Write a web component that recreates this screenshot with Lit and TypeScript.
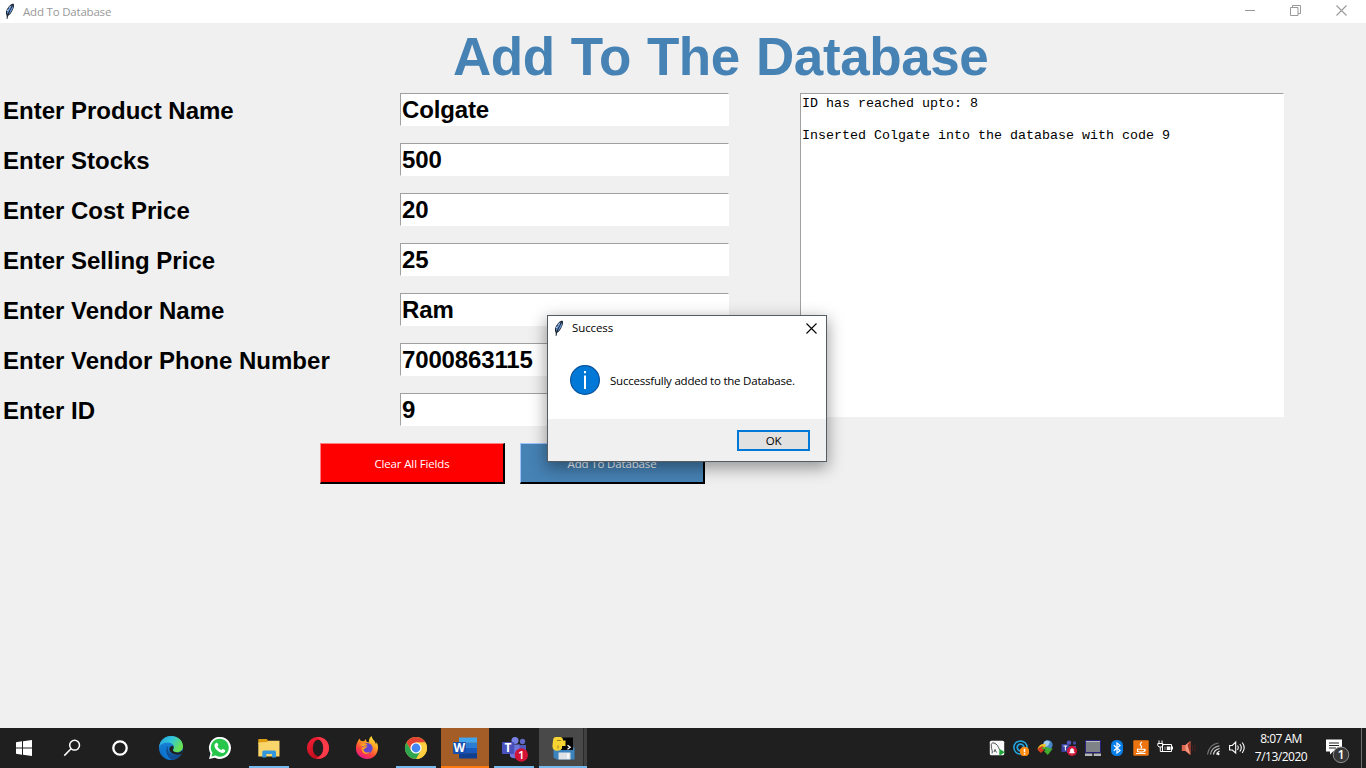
import { LitElement, html, css, svg, nothing } from "lit";
import { customElement, property } from "lit/decorators.js";

const feather = html`<svg width="12" height="17" viewBox="0 0 12 17">
  <path d="M3 16 L2.6 12.5 C1 9 3 5.5 5.5 2.8 C7 1 8.7 .6 9.6 .8 C10.5 2.5 10 4.5 9 6.3 C8.2 8.6 6.6 11.5 4.3 12.6z" fill="#17202e"/>
  <path d="M3.3 11.5 C2.4 8 5 4.6 7.4 2.2 L7 5.2 L4.6 9z" fill="#6ba0e6"/>
  <path d="M4.6 11.3 L6.2 7.5 L9.2 2 C9.6 4.2 7.6 9.4 4.6 11.3z" fill="#6d9ee0"/>
  <path d="M3 16 L4.3 10 L8.6 2" fill="none" stroke="#26303d" stroke-width=".7"/>
  <path d="M5 4.8 L6.8 2.7 M3.2 8 L4 6.4" stroke="#d4e2f3" stroke-width=".9"/>
</svg>`;

const icons: Record<string, unknown> = {
  start: svg`<path fill="#fff" d="M4 6.2 10 5.3v6.2H4zM11 5.2 20 4v7.5h-9zM4 12.5h6v6.2l-6-.9zM11 12.5h9V20l-9-1.3z"/>`,
  search: svg`<g fill="none" stroke="#fff" stroke-width="1.5"><circle cx="14.6" cy="9.2" r="4.9"/><path d="M11 12.8 4.3 19.6"/></g>`,
  cortana: svg`<circle cx="12" cy="12" r="6.7" fill="none" stroke="#fff" stroke-width="2.3"/>`,
  edge: svg`<defs><linearGradient id="eg" x1="0" y1="0" x2="1" y2=".5"><stop offset="0" stop-color="#269fdc"/><stop offset=".5" stop-color="#31c6dc"/><stop offset="1" stop-color="#6be24b"/></linearGradient>
    <linearGradient id="eb" x1="0" y1="0" x2="0" y2="1"><stop offset="0" stop-color="#1d8fe0"/><stop offset="1" stop-color="#0b62bb"/></linearGradient></defs>
    <circle cx="12" cy="12" r="12" fill="url(#eb)"/>
    <path d="M.1 11C1 4.2 6 0 12 0c7 0 12 4.800 12 10.300 0 3.700-2.800 6-6 6-2.800 0-4.200-1-4.200-2 0-.8 1-1.200 1-3C14.800 8.500 12 6.600 8.600 6.600 4.600 6.600 1.400 8.400.1 11z" fill="url(#eg)"/>
    <path d="M8.800 9.300C5.500 13.500 8.500 21 13 23.900 7.500 24.300 3.600 20 3.700 15.500 3.700 12 6 9.800 8.800 9.300z" fill="#0d78d1"/>
    <path d="M9.400 9.500C6.500 16.500 13 21.500 22 17.600 20.200 21.200 17 23.400 13 23.900 7 20.500 5.500 13 9.400 9.500z" fill="#124d91"/>
    <path d="M14.700 12.300C13.200 14.300 14 16 18 16.500 20.500 16.600 22.200 15.500 23.200 13.900 24 16 22.800 17.200 22.300 18 16.500 20 10.500 17.500 10.300 13 10.400 11 12 9.600 14.300 9.800z" fill="#202020"/>`,
  whatsapp: svg`<path d="M1 23 2.500 17.500A11 11 0 1 1 7 21.700z" fill="#fff"/><path d="M3.300 20.600 4.500 17A9 9 0 1 1 7.500 19.600z" fill="#29c64c"/>
    <path d="M8.400 6.700c.6-.2 1 0 1.300.8l.6 1.500c.2.500-.5 1.100-.8 1.500.9 1.700 2.100 2.800 3.900 3.600.7-.7 1-1.300 1.500-1.100l2 1c.7.400.2 1.700-.5 2.300-1.200 1-2.700.7-4.500-.1-2.400-1-4.200-2.900-5.200-5.200-.7-1.700 0-3.700 1.700-4.300z" fill="#fff"/>`,
  explorer: svg`<path d="M1.300 3h8.500l1.500 2h9v3H1.300z" fill="#dc9d12"/><path d="M1.300 6.500 10 6l1.500-1.300h11V20.500H1.300z" fill="#fad56c"/>
    <path d="M5.300 21.500v-5.500q0-1.500 1.500-1.500H17.500q1.500 0 1.500 1.500v5.500H15v-3.500H9.300v3.500z" fill="#3297dd"/>`,
  opera: svg`<defs><linearGradient id="op" x1="0" y1="0" x2=".7" y2="1"><stop offset="0" stop-color="#fa2137"/><stop offset="1" stop-color="#b30917"/></linearGradient></defs>
    <ellipse cx="12" cy="12" rx="11" ry="11" fill="url(#op)"/><path d="M10 1.600C16 .2 23 4 23 12S16 23.800 10 22.400C19 20.500 19 3.500 10 1.600z" fill="#fb3b49"/><ellipse cx="12" cy="12" rx="5.2" ry="8.300" fill="#201f1f"/>`,
  firefox: svg`<defs><linearGradient id="ff" x1=".85" y1="0" x2=".3" y2="1"><stop offset="0" stop-color="#fff13c"/><stop offset=".4" stop-color="#ff9a23"/><stop offset=".72" stop-color="#ff3f3d"/><stop offset="1" stop-color="#e3178c"/></linearGradient></defs>
    <path d="M2.500 6C3 4 4.400 3 4.900 2.500 5 4 5.500 4.700 6.600 5L9 5.200 11 2.900 11.300 5.600 13.800 6.500C13.700 3.200 15 .8 16.700 0c0 3 3.400 4.600 4.300 8.300C21.500 7.500 21.500 6.600 21.500 6 23.500 9 23.800 14.500 21 18.400 16.900 24 8.500 24.600 3.800 19.600.2 15.800.3 9.800 2.500 6z" fill="url(#ff)"/>
    <circle cx="12.300" cy="12.300" r="5.300" fill="#6547cf"/><path d="M6.500 12.500C7.500 10 10 11 12.500 9.500 11.300 12.500 9.500 12 8.500 14 9.500 16.500 12.500 17.300 14.800 15.800 12.500 20 6.500 17.800 6.500 12.500zM4.500 9 8.500 7 12.500 8.500 9 10.500z" fill="#ff9c24"/>`,
  chrome: svg`<circle cx="12" cy="12" r="11" fill="#fbc93d"/><path d="M2.500 6.400A11 11 0 0 1 21.500 6.500H12L7 14z" fill="#e34234"/><path d="M2.500 6.400 7.300 14.700 12 17.500 16.700 14.800 12.200 23A11 11 0 0 1 2.500 6.400z" fill="#30a550"/><path d="M12.200 23 16.800 14.800 17.500 10.500 12 6.500h9.500A11 11 0 0 1 12.200 23z" fill="#fdce3e"/><circle cx="12" cy="12" r="5.600" fill="#fff"/><circle cx="12" cy="12" r="4.400" fill="#4587f1"/>`,
  word: svg`<path d="M6 1.500h18v5.300H6z" fill="#41a5ee"/><path d="M6 6.800h18V12H6z" fill="#2b7cd3"/><path d="M6 12h18v5.300H6z" fill="#185abd"/><path d="M6 17.200h18v5.300H6z" fill="#103f91"/><rect x="0" y="6" width="13" height="12" rx="1" fill="#174fae"/>
    <text x="6.400" y="16.300" font-size="12" text-anchor="middle" class="glyph">W</text>`,
  teams: svg`<circle cx="20.500" cy="5.500" r="2.700" fill="#6169c5"/><circle cx="13" cy="4.500" r="3.500" fill="#7780e5"/><path d="M8 8.500h10v9a6 6 0 0 1-10 3z" fill="#6e77dd"/><path d="M17.500 9H24v7a5 5 0 0 1-6.500 4z" fill="#535bbd"/><rect x="0" y="6" width="12.300" height="12" rx="1" fill="#4951bc"/><text x="6" y="16.300" font-size="12" text-anchor="middle" class="glyph">T</text>
    <circle cx="19.300" cy="19" r="6.700" fill="#d01336"/><text x="19.200" y="23" font-size="11.500" text-anchor="middle" class="glyph thin">1</text>`,
  idle: svg`<path d="M2.500 11.500h21v12h-18l-3-2z" fill="#3b83bd"/><path d="M7.500 16.500h12v7h-12z" fill="#dfe2e7"/><path d="M16 17.500h2v5h-2z" fill="#f8f8f8"/><path d="M10 1.500h12v12.500H10z" fill="#070707"/><path d="m16.500 9.300 2.700 2-2.700 2" stroke="#fff" fill="none" stroke-width="1.300"/><path d="M2 5Q2 1 5 1h4Q12 1 12 4.500h2.500v5.500H11v2.500Q9 15.500 4 14.500 1 13 1.500 9z" fill="#f8d432"/><path d="M6 4.500h4M7 9.500v3" stroke="#8a6a10" stroke-width=".8"/>`,
};

const trayIcons = [
  svg`<rect x=".8" y=".8" width="14.400" height="14.400" rx="1.500" fill="#f8f8f8"/><path d="M3 13.500C4 11.500 2.500 9.500 2.300 6.500 2 3.500 3 2.500 5 3 8 3.800 9.500 7 10.300 9.300L13 12 10.500 13M5 12 6 9.500 7.500 12.500" fill="none" stroke="#4f5357" stroke-width="1"/><path d="m10.300 8.800 5.700 3.400-5.700 3.500z" fill="#22a63c"/>`,
  svg`<circle cx="7.500" cy="7.500" r="6.600" fill="none" stroke="#23a7e3" stroke-width="1.500"/><circle cx="7.500" cy="7.500" r="3.300" fill="none" stroke="#23a7e3" stroke-width="1.700"/><circle cx="11.500" cy="11.500" r="4.800" fill="#ff8a10"/><path d="M11.500 8.700v3.500M11.500 13v1.500" stroke="#fff" stroke-width="1.500"/>`,
  svg`<circle cx="10.800" cy="5" r="4.800" fill="#4687c9"/><path d="M7 2q3-3 6 0l-2 4q-3 1-5 0z" fill="#a1cced"/><path d="M.5 9Q3 2.500 9 4.500L7.500 9z" fill="#edc323"/><path d="M.5 10Q1 7 6 6l1 4-3 3z" fill="#d43c21"/><path d="M5 7.500Q11 6 13 8.500h2.800l-5 6.500-4-4 2-1Q8 9 5 9z" fill="#42ad2f"/>`,
  svg`<circle cx="8" cy="2.800" r="2.300" fill="#535abf"/><circle cx="13.500" cy="3" r="1.700" fill="#444ba5"/><path d="M6 6h9v7H6z" fill="#5058b7"/><path d="M.5 4H8v8H.5z" fill="#39429e"/><path d="M2.500 6h3.800M4.400 6v4.500" stroke="#fff"/><circle cx="11" cy="11" r="5" fill="#d31639"/><path d="M8.300 13h5.400l-.9-1.300V9.800q-1.800-3-3.600 0v1.900zM10.300 14h1.400" fill="#fff" stroke="#fff" stroke-width=".4"/>`,
  svg`<path d="M.5 .5h15v12H.5z" fill="#7f8387" stroke="#29237c"/><path d="M1 1.500h14" stroke="#b7bbc4"/><path d="M0 13.500h7.300V16H0zM8.700 13.500H16V16H8.700z" fill="#b5b9bd"/>`,
  svg`<rect x="2" width="12" height="16" rx="5.500" fill="#087ee9"/><path d="m4.800 5.200 6.200 5.400L8 13V3l3 2.400-6.200 5.400" fill="none" stroke="#fff" stroke-width="1.200"/>`,
  svg`<rect x=".3" y=".3" width="15.400" height="15.400" rx="1" fill="#ee7410"/><path d="M9 2q-3 2.500-1 3.800 1.300 1-.2 2.500M4.500 9.200h7v2q-3.500 1.800-7 0zM11.500 9.500q2 .2 0 1.800M3 13.500h9.500" fill="none" stroke="#fff" stroke-width="1.100"/>`,
  svg`<path d="M5.500 4.500h9v7h-9zM15.500 6.500v3M2 .5v3M5 .5v3M.8 3.500h5v2l-1 1.500H2L.8 5.500zM3.300 7v4.500h3" fill="none" stroke="#fff"/><path d="M10 6.500h3.500v3.500H10z" fill="#fff"/><path d="M7 6.500h3v3.500H7z" fill="#555"/>`,
  svg`<path d="M.8 5h3.500L9.500 .8v14.400L4.300 11H.8z" fill="#dc6650"/><path d="M4.500 5.300 9 1.700v12.600L4.500 10.600z" fill="#f19b82"/><path d="M6.500 5 9.500 1v14z" fill="#a33325"/><path d="M11.500 5v6M14 4v8" stroke="#44221f"/>`,
  svg`<g fill="none" stroke="#eee" stroke-width="1.200"><path d="M11.600 14.500q0-2 3-3.500"/><path d="M8.500 14.500Q9 9.800 14.500 8.500"/><path d="M5.500 14.500Q6.500 7 14.500 5.800" stroke="#aaa"/><path d="M2.500 14.500Q4 4.500 13.500 3" stroke="#777"/></g><circle cx="13.300" cy="14" r="1.200" fill="#fff"/>`,
  svg`<g fill="none" stroke="#fff" stroke-width="1.100"><path d="M.6 5.500h2.700L6.700 2v11L3.300 10H.6zM8.500 5.500q1.500 2 0 4.500M10.800 4q3 3.500 0 7.500M13.200 2.500q4 5 0 10.500"/></g>`,
];

@customElement("close-glyph")
class CloseGlyph extends LitElement {
  static styles = css`:host { display: block; width: 11px; height: 11px } svg { display: block }`;
  render() {
    return html`<svg width="11" height="11" viewBox="0 0 11 11"><path d="M.5 .5 10.500 10.500M10.500 .5 .5 10.500" stroke="currentColor" stroke-width="1.100"/></svg>`;
  }
}

@customElement("message-box")
class MessageBox extends LitElement {
  static styles = css`
    :host { box-sizing: border-box; display: flex; flex-direction: column; width: 280px; height: 147px; background: #fff;
      border: 1px solid #555c62; box-shadow: 0 5px 15px 1px rgba(0,0,0,.38);
      font: 12px "Open Sans", sans-serif; color: #000; }
    .bar { display: flex; align-items: center; height: 24px; padding: 0 9px 0 5px; }
    .bar svg { margin-right: 7px; }
    .caption { flex: 1; font-size: 11.500px; letter-spacing: -.1px; padding-bottom: 2px; }
    .body { flex: 1; display: flex; align-items: center; padding: 0 0 0 22px; }
    .message { margin-left: 10px; font-size: 11.500px; letter-spacing: -.22px; white-space: nowrap; padding-top: 2px; }
    .footer { display: flex; justify-content: flex-end; align-items: center; height: 42px; padding-right: 16px; background: #f0f0f0; }
    .ok { box-sizing: border-box; width: 73px; height: 21px; border: 2px solid #0078d7; background: #e1e1e1; padding: 0; color: #000;
      font: 11.500px "Open Sans", sans-serif; line-height: 17px; letter-spacing: -.3px; }
  `;
  render() {
    return html`
      <div class="bar">${feather}<span class="caption">Success</span><close-glyph></close-glyph></div>
      <div class="body">
        <svg width="30" height="30" viewBox="0 0 30 30"><circle cx="15" cy="15" r="14.400" fill="#0078d7" stroke="#07529a" stroke-width="1.200"/><path d="M14 10.500h2V24h-2zM14 6h2v2.200h-2z" fill="#fff"/></svg>
        <span class="message">Successfully added to the Database.</span>
      </div>
      <div class="footer"><button class="ok">OK</button></div>`;
  }
}

@customElement("task-bar")
class TaskBar extends LitElement {
  static styles = css`
    :host { display: flex; height: 40px; background: #1f1f1f; color: #fff; font-family: "Open Sans", sans-serif; }
    .cell { display: flex; align-items: center; justify-content: center; width: 48px; height: 40px; box-sizing: border-box; }
    .apps { display: flex; gap: 1px; margin-left: 3px; }
    .open { background: linear-gradient(#76b9ed, #76b9ed) center bottom / 40px 2px no-repeat; }
    .alert { background: #a55d27; border-bottom: 2px solid #ff7a10; padding-top: 2px; }
    .active { background: linear-gradient(#76b9ed, #76b9ed) bottom / 100% 2px no-repeat, linear-gradient(90deg, #494949 44px, #2a2a2a 44px, #2a2a2a 45px, #414141 45px); }
    .glyph { fill: #fff; font-family: "Open Sans", sans-serif; font-weight: 700; }
    .thin { font-weight: 600; }
    .tray { display: flex; align-items: center; gap: 8px; margin-left: auto; }
    .tray svg { display: block; }
    .clock { width: 72px; text-align: center; font-size: 12px; line-height: 18px; letter-spacing: -.5px; padding-bottom: 1px; white-space: nowrap; box-sizing: border-box; }
    .note { width: 44px; display: flex; justify-content: center; padding: 2px 4px 0 0; box-sizing: border-box; }
    .peek { width: 4px; border-left: 1px solid #6d6d6d; }
    .right { display: flex; align-items: center; }
  `;
  private cell(name: string, state = "") {
    return html`<div class="cell ${state}"><svg width="24" height="24" viewBox="0 0 24 24" overflow="visible">${icons[name]}</svg></div>`;
  }
  render() {
    return html`
      ${this.cell("start")}${this.cell("search")}${this.cell("cortana")}
      <div class="apps">
        ${this.cell("edge")}${this.cell("whatsapp")}${this.cell("explorer", "open")}${this.cell("opera")}${this.cell("firefox")}
        ${this.cell("chrome", "open")}${this.cell("word", "alert")}${this.cell("teams", "open")}${this.cell("idle", "active")}
      </div>
      <div class="tray">${trayIcons.map((i) => html`<svg width="16" height="16" viewBox="0 0 16 16">${i}</svg>`)}</div>
      <div class="right">
        <div class="clock"><div>8:07 AM</div><div>7/13/2020</div></div>
        <div class="note"><svg width="26" height="28" viewBox="0 0 26 28"><path d="M2 4.500h16v12h-9l-3 3v-3H2z" fill="#fff"/><path d="M5 8h10M5 10.500h10M5 13h7" stroke="#222"/><circle cx="17" cy="19.800" r="7.800" fill="#383838" stroke="#909090"/><text x="17" y="24.200" text-anchor="middle" font-size="12.500" class="glyph thin">1</text></svg></div>
      </div>
      <div class="peek"></div>`;
  }
}

@customElement("form-row")
class FormRow extends LitElement {
  @property() label = "";
  @property() value = "";
  static styles = css`
    :host { display: grid; grid-template: 33px / 400px 329px; font: bold 24px "Liberation Sans", Arial, sans-serif; color: #000; }
    .label { padding-left: 3px; line-height: 36px; white-space: nowrap; }
    .field { box-sizing: border-box; background: #fff; border: 1px solid #a0a0a0; border-right-color: #fff; border-bottom-color: #fff; padding-left: 1px; line-height: 32px; letter-spacing: -.15px; }
  `;
  render() {
    return html`<div class="label">${this.label}</div><div class="field">${this.value || nothing}</div>`;
  }
}

@customElement("app-root")
class AppRoot extends LitElement {
  static styles = css`
    :host { display: flex; flex-direction: column; position: relative; width: 1366px; height: 768px; overflow: hidden; background: #f0f0f0; }
    .titlebar { display: flex; align-items: center; height: 23px; background: #fff; color: #999; padding: 0 19px 0 4px; box-sizing: border-box; font: 11.500px "Open Sans", sans-serif; }
    .titlebar .name { flex: 1; margin-left: 7px; letter-spacing: -.2px; }
    .controls { display: flex; align-items: center; gap: 35px; margin-top: -2px; }
    .content { flex: 1; display: flex; flex-direction: column; }
    .heading { margin: 0; padding-left: 453px; height: 70px; font: bold 53px/68px "Liberation Sans", Arial, sans-serif; letter-spacing: -.4px; word-spacing: 1.700px; color: #4682b4; white-space: nowrap; }
    .columns { display: flex; gap: 71px; height: 350px; }
    .form { display: flex; flex-direction: column; gap: 17px; width: 729px; }
    .log { box-sizing: border-box; width: 484px; height: 324px; margin: 0; background: #fff; border: 1px solid #a0a0a0; border-right-color: #fff; border-bottom-color: #fff; padding: 2px 1px 1px; font: 13.330px/16px "Liberation Mono", "Courier New", monospace; color: #000; }
    .actions { display: flex; gap: 15px; padding-left: 320px; }
    .btn { box-sizing: border-box; width: 185px; height: 41px; padding: 0; color: #fff; font: 11.500px "Open Sans", sans-serif; letter-spacing: -.15px; border-style: solid; border-width: 1px 2px 2px 1px; }
    .clear { background: #f00; border-color: #ff8080 #000 #000 #ff8080; }
    .add { background: #4682b4; border-color: #a0c4ff #000 #000 #a0c4ff; }
    .dialog { position: absolute; left: 547px; top: 315px; }
  `;
  private rows = [
    ["Enter Product Name", "Colgate"], ["Enter Stocks", "500"], ["Enter Cost Price", "20"], ["Enter Selling Price", "25"],
    ["Enter Vendor Name", "Ram"], ["Enter Vendor Phone Number", "7000863115"], ["Enter ID", "9"],
  ];
  render() {
    return html`
      <div class="titlebar">${feather}<span class="name">Add To Database</span>
        <div class="controls">
          <svg width="11" height="11"><path d="M1 5.500h10" stroke="#999"/></svg>
          <svg width="11" height="11" fill="none" stroke="#999"><path d="M.5 2.500h7.500v8H.5zM2.500 2.500V.5h8v8H8"/></svg>
          <close-glyph></close-glyph>
        </div>
      </div>
      <div class="content">
        <h1 class="heading">Add To The Database</h1>
        <div class="columns">
          <div class="form">${this.rows.map(([l, v]) => html`<form-row label=${l} value=${v}></form-row>`)}</div>
          <pre class="log">${"ID has reached upto: 8\n\nInserted Colgate into the database with code 9"}</pre>
        </div>
        <div class="actions"><button class="btn clear">Clear All Fields</button><button class="btn add">Add To Database</button></div>
      </div>
      <task-bar></task-bar>
      <message-box class="dialog"></message-box>`;
  }
}
